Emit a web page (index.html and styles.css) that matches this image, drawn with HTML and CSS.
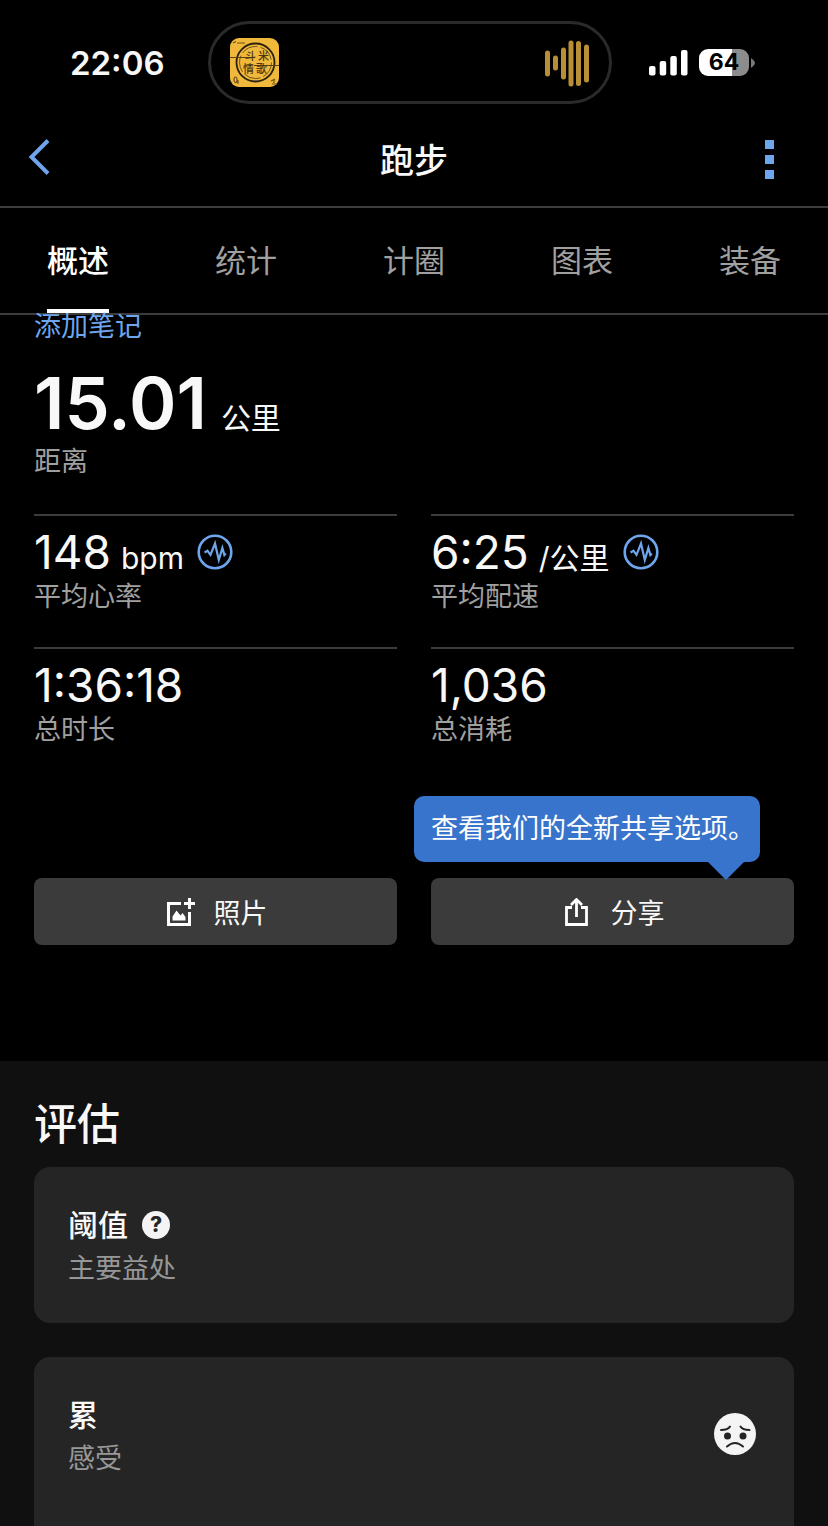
FILE: index.html
```html
<!DOCTYPE html>
<html lang="zh-CN">
<head>
<meta charset="utf-8">
<meta name="viewport" content="width=device-width, initial-scale=1">
<title>跑步</title>
<link rel="stylesheet" href="styles.css">
</head>
<body>
<div class="status">
  <time class="clock">22:06</time>
  <div class="island">
    <svg class="cover" viewBox="0 0 49 49" role="img" aria-label="专辑封面">
      <rect width="49" height="49" rx="9" fill="#f0b93c"/>
      <circle cx="25.500" cy="24.500" r="19" fill="none" stroke="#2a210c" stroke-width="1.800"/>
      <circle cx="25.500" cy="24.500" r="16" fill="none" stroke="#6d5319" stroke-width="1" stroke-dasharray="17 3"/>
      <path d="M0 19.500h25M24 27.500h25" stroke="#5b4312" stroke-width="1"/>
      <path d="M3 5l3-1.500M7 5h8M4 42c0-4 3-4 3 0s-3 3-3 0M8 42v4M41 43l4-2M42 46h5M44 41v4" stroke="#6d5319" stroke-width="1.200" fill="none"/>
      <text class="cover-text" x="15" y="22">斗</text><text class="cover-text" x="28" y="22">米</text>
      <text class="cover-text" x="13" y="35">情</text><text class="cover-text" x="26" y="35">歌</text>
    </svg>
    <svg class="wave" viewBox="0 0 45 48" aria-hidden="true">
      <path d="M2.500 14v21M10.500 19v10M18.500 11v27M26 4v41M33.500 4.500v40M41.500 8v33" stroke="#b98f35" stroke-width="5" stroke-linecap="round"/>
    </svg>
  </div>
  <div class="system">
    <svg class="signal" viewBox="0 0 39 26" aria-hidden="true">
      <g fill="#fff"><rect y="16" width="6.500" height="9.500" rx="2"/><rect x="10.700" y="11" width="6.500" height="14.500" rx="2"/><rect x="21.300" y="6" width="6.500" height="19.500" rx="2"/><rect x="32" width="6.500" height="25.500" rx="2"/></g>
    </svg>
    <span class="battery">64</span>
    <svg class="nub" viewBox="0 0 4 10" aria-hidden="true"><path d="M0 0q4 3 4 5t-4 5z" fill="#777"/></svg>
  </div>
</div>
<header class="bar">
  <button class="icon-btn" type="button" aria-label="返回">
    <svg class="back" viewBox="0 0 22 42" aria-hidden="true"><path d="M20 1.500L3.500 18 20 34.500" fill="none" stroke="#6ea5ec" stroke-width="4"/></svg>
  </button>
  <h1 class="title">跑步</h1>
  <button class="icon-btn icon-btn-end" type="button" aria-label="更多">
    <svg class="more" viewBox="0 0 9 39" aria-hidden="true"><path d="M0 0h9v9H0zM0 15h9v9H0zM0 30h9v9H0z" fill="#6ea5ec"/></svg>
  </button>
</header>
<nav class="tabs">
  <a class="tab tab-active" href="#overview" aria-current="page">概述</a>
  <a class="tab" href="#stats">统计</a>
  <a class="tab" href="#laps">计圈</a>
  <a class="tab" href="#charts">图表</a>
  <a class="tab" href="#gear">装备</a>
</nav>
<main class="main" id="overview">
  <section class="summary">
    <a class="note" href="#note">添加笔记</a>
    <div class="distance"><span class="distance-num">15.01</span><span class="unit">公里</span></div>
    <div class="label">距离</div>
    <div class="grid">
      <div class="stat">
        <div class="value"><span class="num">148</span><span class="unit">bpm</span>
          <button class="chart-btn" type="button" aria-label="心率图表"><svg class="pulse" viewBox="0 0 36 36" aria-hidden="true"><circle cx="18" cy="18" r="16.300" fill="none" stroke="#6ea5ec" stroke-width="2.600"/><path d="M7.500 18.500l3-1.700 3 4L18 9.500l3.800 16.500 3.600-12 2 7 1.400-1.500" fill="none" stroke="#6ea5ec" stroke-width="2.200"/></svg></button>
        </div>
        <div class="label">平均心率</div>
      </div>
      <div class="stat">
        <div class="value"><span class="num">6:25</span><span class="unit">/公里</span>
          <button class="chart-btn" type="button" aria-label="配速图表"><svg class="pulse" viewBox="0 0 36 36" aria-hidden="true"><circle cx="18" cy="18" r="16.300" fill="none" stroke="#6ea5ec" stroke-width="2.600"/><path d="M7.500 18.500l3-1.700 3 4L18 9.500l3.800 16.500 3.600-12 2 7 1.400-1.500" fill="none" stroke="#6ea5ec" stroke-width="2.200"/></svg></button>
        </div>
        <div class="label">平均配速</div>
      </div>
      <div class="stat">
        <div class="value"><span class="num">1:36:18</span></div>
        <div class="label">总时长</div>
      </div>
      <div class="stat">
        <div class="value"><span class="num">1,036</span></div>
        <div class="label">总消耗</div>
      </div>
    </div>
    <div class="actions">
      <button class="action" type="button">
        <svg class="action-icon" viewBox="0 0 28 28" aria-hidden="true"><path d="M14 5.500H1.500v21h21V14" fill="none" stroke="#fff" stroke-width="3"/><path d="M22.500 0v11M17 5.500h11" stroke="#fff" stroke-width="3"/><path d="M5.500 22.500v-4l4-6 4 5 2-2.500 3 4v3.500z" fill="#fff"/></svg>
        照片
      </button>
      <div class="share">
        <button class="action" type="button">
          <svg class="action-icon" viewBox="0 0 28 28" aria-hidden="true"><path d="M8 9.500H2.500v17h20v-17H17" fill="none" stroke="#fff" stroke-width="2.800"/><path d="M12.500 19V1.500M7 7L12.500 1.500 18 7" fill="none" stroke="#fff" stroke-width="2.800"/></svg>
          分享
        </button>
        <div class="tip" role="tooltip">查看我们的全新共享选项。</div>
      </div>
    </div>
  </section>
  <section class="review">
    <h2 class="heading">评估</h2>
    <article class="card">
      <div>
        <h3 class="card-title">阈值
          <button class="help" type="button" aria-label="帮助">?</button>
        </h3>
        <p class="card-sub">主要益处</p>
      </div>
    </article>
    <article class="card card-last">
      <div>
        <h3 class="card-title">累</h3>
        <p class="card-sub">感受</p>
      </div>
      <svg class="face" viewBox="0 0 42 42" role="img" aria-label="累"><circle cx="21" cy="21" r="21" fill="#f4f4f4"/><g fill="#242424"><circle cx="13.500" cy="23" r="3.500"/><circle cx="29" cy="23" r="3.500"/></g><g fill="none" stroke="#242424" stroke-width="2" stroke-linecap="round"><path d="M7 17q7 0 9-3.500M35.500 17q-7 0-9-3.500M13 33.500q8-7 16 0"/></g></svg>
    </article>
  </section>
</main>
</body>
</html>
```
FILE: styles.css
```css
* {
  box-sizing: border-box;
}

body {
  margin: 0;
  min-height: 100vh;
  display: flex;
  flex-direction: column;
  background: #000;
  color: #f8f8f8;
  font-family: Inter, "Noto Sans CJK SC", sans-serif;
  font-size: 27px;
}

button {
  margin: 0;
  padding: 0;
  border: 0;
  background: none;
  color: inherit;
  font: inherit;
  cursor: pointer;
}

a {
  color: inherit;
  text-decoration: none;
}

h1, h2, h3, p {
  margin: 0;
}

svg {
  display: block;
  flex: none;
}

.status {
  display: grid;
  grid-template-columns: 1fr 404px 1fr;
  align-items: center;
  padding: 21px 8px 0 0;
}

.clock {
  padding-left: 70px;
  font-size: 33px;
  font-weight: 600;
}

.island {
  display: flex;
  align-items: center;
  justify-content: space-between;
  height: 83px;
  padding: 0 19px;
  border: 3px solid #2a2a2a;
  border-radius: 42px;
}

.cover {
  width: 49px;
  height: 49px;
}

.cover-text {
  font-family: "Noto Sans CJK SC", sans-serif;
  font-size: 11px;
  font-weight: 500;
  fill: #4a3610;
}

.wave {
  width: 45px;
  height: 48px;
}

.system {
  display: flex;
  align-items: center;
  padding-left: 37px;
}

.signal {
  width: 39px;
  height: 26px;
}

.battery {
  width: 50px;
  height: 27px;
  margin: 0 2px 0 11px;
  border-radius: 9px;
  background: linear-gradient(to right, #fff 66%, #8c8c8c 66%);
  color: #000;
  font-size: 23px;
  font-weight: 700;
  line-height: 27px;
  text-align: center;
}

.nub {
  width: 4px;
  height: 10px;
}

.bar {
  display: grid;
  grid-template-columns: 1fr auto 1fr;
  align-items: center;
  height: 104px;
  padding: 9px 28px 0;
  border-bottom: 2px solid #3c3c3c;
}

.icon-btn {
  justify-self: start;
}

.icon-btn-end {
  justify-self: end;
  padding: 0 27px;
  margin-right: -1px;
}

.back {
  width: 22px;
  height: 42px;
}

.more {
  width: 9px;
  height: 39px;
}

.title {
  padding-top: 2px;
  font-size: 34px;
  font-weight: 500;
  line-height: 48px;
}

.tabs {
  display: flex;
  justify-content: space-between;
  padding: 0 47px;
  border-bottom: 2px solid #3c3c3c;
}

.tab {
  color: #a0a0a0;
  font-size: 31px;
  line-height: 97px;
  padding-top: 4px;
  border-bottom: 4px solid transparent;
}

.tab-active {
  border-color: #fff;
  color: #fff;
  font-weight: 500;
}

.main {
  flex: 1;
  display: flex;
  flex-direction: column;
}

.summary {
  padding: 0 34px 116px;
}

.note {
  display: block;
  margin-bottom: 28px;
  color: #6ea5ec;
  line-height: 24px;
}

.distance,
.value {
  display: flex;
  align-items: baseline;
}

.distance {
  gap: 14px;
  margin-bottom: 5px;
}

.distance-num {
  font-size: 72px;
  font-weight: 600;
  line-height: 72px;
}

.value {
  gap: 10px;
}

.num {
  font-size: 46px;
  line-height: 53px;
}

.unit {
  font-size: 30px;
  line-height: 30px;
}

.chart-btn {
  align-self: flex-start;
  margin: 8px 0 0 3px;
}

.pulse {
  width: 36px;
  height: 36px;
}

.label {
  color: #a0a0a0;
  line-height: 36px;
}

.grid {
  display: grid;
  grid-template-columns: 1fr 1fr;
  column-gap: 34px;
  margin-top: 34px;
}

.stat {
  padding: 10px 0 32px;
  border-top: 2px solid #3c3c3c;
}

.actions {
  display: grid;
  grid-template-columns: 1fr 1fr;
  gap: 34px;
  margin-top: 98px;
}

.action {
  display: flex;
  align-items: center;
  justify-content: center;
  gap: 19px;
  width: 100%;
  height: 67px;
  padding-left: 3px;
  border-radius: 8px;
  background: #3b3b3b;
}

.action-icon {
  width: 28px;
  height: 28px;
}

.share {
  position: relative;
}

.tip {
  position: absolute;
  right: 34px;
  bottom: 83px;
  padding: 0 5px 0 17px;
  border-radius: 10px;
  background: #3874cb;
  color: #fff;
  line-height: 66px;
  white-space: nowrap;
}

.tip::after {
  content: "";
  position: absolute;
  top: 100%;
  right: 16px;
  border: 18px solid transparent;
  border-top-color: #3874cb;
  border-bottom-width: 0;
}

.review {
  flex: 1;
  display: flex;
  flex-direction: column;
  padding: 33px 34px 0;
  background: #101010;
}

.heading {
  margin-bottom: 13px;
  font-size: 43px;
  font-weight: 500;
  line-height: 60px;
}

.card {
  display: flex;
  justify-content: space-between;
  margin-bottom: 34px;
  padding: 36px 38px 32px 34px;
  border-radius: 16px;
  background: #252525;
}

.card-last {
  flex: 1;
  align-items: flex-start;
  margin-bottom: 0;
  padding-bottom: 0;
  border-radius: 16px 16px 0 0;
}

.card-title {
  display: flex;
  align-items: center;
  gap: 14px;
  font-size: 30px;
  font-weight: 500;
  line-height: 44px;
}

.card-sub {
  color: #979797;
  line-height: 44px;
}

.help {
  width: 28px;
  height: 28px;
  border-radius: 50%;
  background: #f4f4f4;
  color: #252525;
  font-size: 21px;
  font-weight: 800;
  line-height: 28px;
}

.face {
  width: 42px;
  height: 42px;
  margin-top: 20px;
}
```
